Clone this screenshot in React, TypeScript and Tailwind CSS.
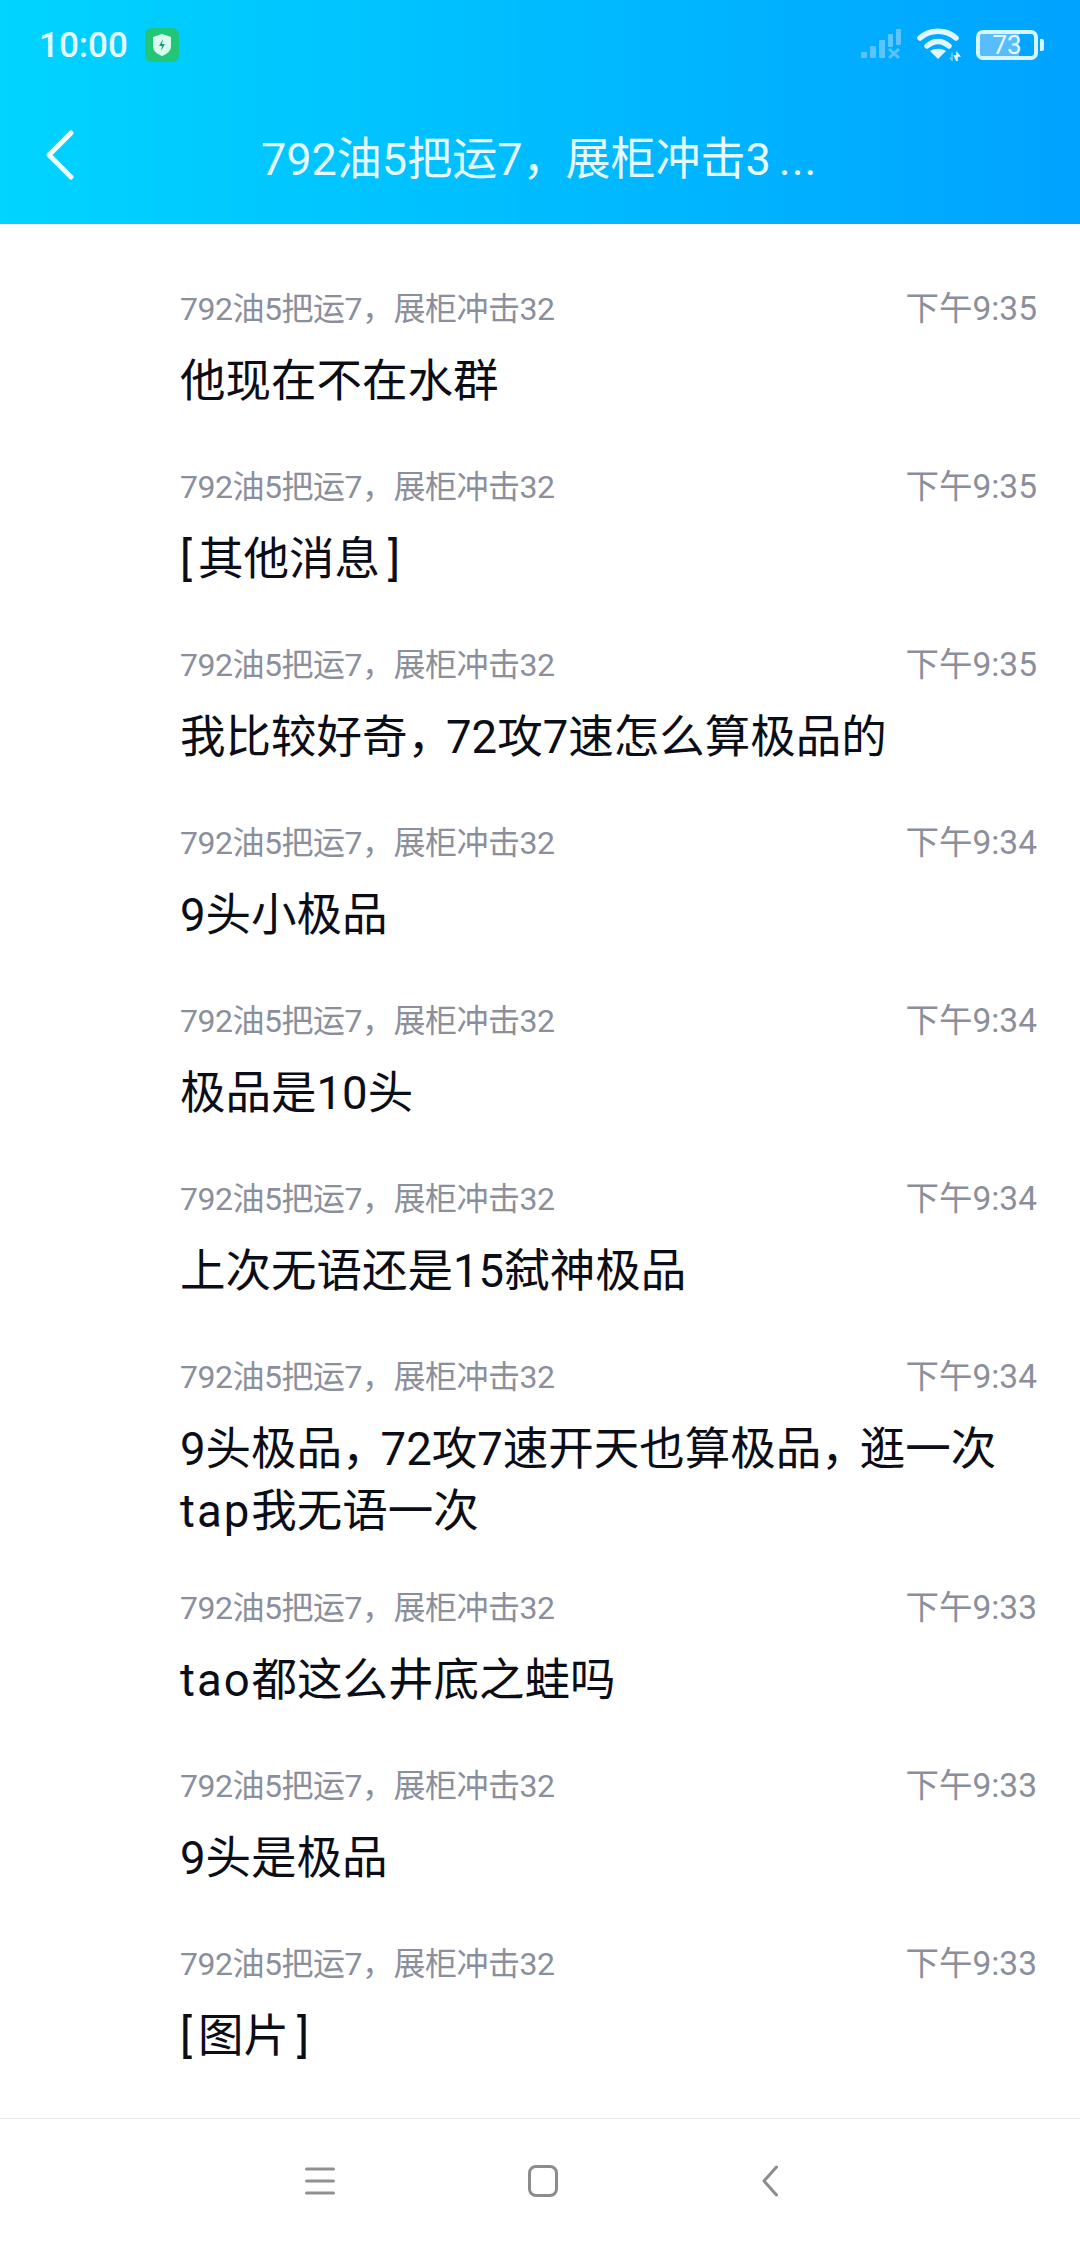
const sender = "792油5把运7，展柜冲击32";

const messages = [
  { time: "下午9:35", lines: ["他现在不在水群"] },
  { time: "下午9:35", lines: ["[其他消息]"] },
  { time: "下午9:35", lines: ["我比较好奇，72攻7速怎么算极品的"] },
  { time: "下午9:34", lines: ["9头小极品"] },
  { time: "下午9:34", lines: ["极品是10头"] },
  { time: "下午9:34", lines: ["上次无语还是15弑神极品"] },
  { time: "下午9:34", lines: ["9头极品，72攻7速开天也算极品，逛一次", "tap我无语一次"] },
  { time: "下午9:33", lines: ["tao都这么井底之蛙吗"] },
  { time: "下午9:33", lines: ["9头是极品"] },
  { time: "下午9:33", lines: ["[图片]"] },
];

// the phone's font sets commas tighter, brackets and latin looser than Noto/Roboto do
function MessageLine({ text }: { text: string }) {
  return (
    <div>
      {text.split(/([，\[\]]|tap|tao)/).map((part, i) => {
        if (part === "，") return <span key={i} className="tracking-[-7px]">{part}</span>;
        if (part === "[") return <span key={i} className="tracking-[6px]">{part}</span>;
        if (part === "]") return <span key={i} className="ml-[8px]">{part}</span>;
        if (part === "tap" || part === "tao") return <span key={i} className="tracking-[2px]">{part}</span>;
        return part;
      })}
    </div>
  );
}

function StatusBar() {
  return (
    <div className="flex h-[90px] items-center pl-[39px] pr-[36px]">
      <span className="text-[35px] font-medium leading-none text-[#e6fbff]">10:00</span>
      {/* shield badge */}
      <svg viewBox="0 0 34 34" className="ml-[17px] h-[34px] w-[34px]">
        <rect width="34" height="34" rx="7" fill="#22c677" />
        <path d="M17 6l9 3v9c0 5-4 8-9 10-5-2-9-5-9-10V9z" fill="#d9fbf0" />
        <path d="M18 11l-4 7h3l-1 5 4-7h-3z" fill="#1f9d78" />
      </svg>
      <div className="ml-auto flex items-center">
        <svg viewBox="0 0 42 32" className="h-[32px] w-[42px]" fill="#5cc4ff">
          <rect x="0" y="23" width="6" height="6" rx="1" />
          <rect x="9" y="17" width="6" height="12" rx="1" />
          <rect x="18" y="11" width="6" height="18" rx="1" />
          <rect x="27" y="5" width="5" height="13" rx="1" />
          <rect x="35" y="0" width="5" height="16" rx="1" />
          <path d="M28 20l10 9M38 20l-10 9" stroke="#5cc4ff" strokeWidth="3" fill="none" />
        </svg>
        <svg viewBox="0 0 44 34" className="ml-[14px] h-[34px] w-[44px]" fill="none" stroke="#e0f7ff" strokeLinecap="round">
          <path d="M3 10C13 1 29 1 39 10" strokeWidth="5.5" />
          <path d="M10 18c7-6 15-6 22 0" strokeWidth="5.5" />
          <path d="M21 31l-8-8c5-3 11-3 16 0z" fill="#e0f7ff" stroke="none" />
          <path d="M35 25v7l-2-2" stroke="#6fd0ff" strokeWidth="1.5" />
          <path d="M40 33v-8l2.500 3h-5z" fill="#e0f7ff" strokeWidth="1.5" />
        </svg>
        <div className="ml-[15px] flex items-center">
          <div className="relative h-[30px] w-[62px] overflow-hidden rounded-[7px] border-[4px] border-[#d6f5ff]">
            <div className="h-full w-[72%] bg-[#58bcff]" />
            <span className="absolute inset-0 flex items-center justify-center text-[26px] leading-none text-[#e6fbff]">73</span>
          </div>
          <div className="ml-[2px] h-[12px] w-[4px] rounded-r-[2px] bg-[#d6f5ff]" />
        </div>
      </div>
    </div>
  );
}

function Header() {
  return (
    <div className="h-[224px] shrink-0 bg-gradient-to-r from-[#00d4ff] via-[#00bcff] to-[#00a3ff]">
      <StatusBar />
      <div className="flex h-[134px] items-center pb-[4px]">
        <svg viewBox="0 0 28 50" className="ml-[46px] h-[50px] w-[28px]" fill="none" stroke="#f0fcff" strokeWidth="5" strokeLinecap="round" strokeLinejoin="round">
          <path d="M25 3L3 25l22 22" />
        </svg>
        <div className="ml-[187px] mt-[8px] text-[45px] leading-none text-[#e6fbff]">
          792油5把运7<span className="tracking-[-2px]">，</span>展柜冲击3
          <span className="ml-[8px] tracking-[1px]">...</span>
        </div>
      </div>
    </div>
  );
}

function MessageRow({ time, lines }: { time: string; lines: string[] }) {
  return (
    <div className="min-h-[178px] pb-[45px]">
      <div className="flex h-[40px] items-center justify-between text-[#8b8f9c]">
        <span className="text-[32px] leading-none tracking-[-0.5px]">{sender}</span>
        <span className="text-[33.5px] leading-none">{time}</span>
      </div>
      <div className="mt-[22px] text-[45.5px] leading-[62px] text-[#0b0d17]">
        {lines.map((line, i) => (
          <MessageLine key={i} text={line} />
        ))}
      </div>
    </div>
  );
}

function NavBar() {
  return (
    <div className="flex h-[130px] shrink-0 items-center border-t border-[#e6e6e6] bg-white pb-[6px] pl-[305px]">
      <svg viewBox="0 0 30 28" className="h-[28px] w-[30px]" fill="none" stroke="#909090" strokeWidth="3" strokeLinecap="round">
        <path d="M1.5 2h27M1.5 14h27M1.5 26h27" />
      </svg>
      <div className="ml-[193px] h-[32px] w-[30px] rounded-[8px] border-[3px] border-[#8c8c8c]" />
      <svg viewBox="0 0 16 32" className="ml-[204px] h-[32px] w-[16px]" fill="none" stroke="#8c8c8c" strokeWidth="3" strokeLinecap="round" strokeLinejoin="round">
        <path d="M14.5 2L2 16l12.500 14" />
      </svg>
    </div>
  );
}

export default function App() {
  return (
    <div
      className="flex h-[2248px] w-[1080px] flex-col overflow-hidden bg-white"
      style={{ fontFamily: 'Roboto, "Noto Sans CJK SC", sans-serif' }}
    >
      <Header />
      <div className="flex-1 overflow-hidden pl-[180px] pr-[43px] pt-[65px]">
        {messages.map((m, i) => (
          <MessageRow key={i} time={m.time} lines={m.lines} />
        ))}
      </div>
      <NavBar />
    </div>
  );
}
